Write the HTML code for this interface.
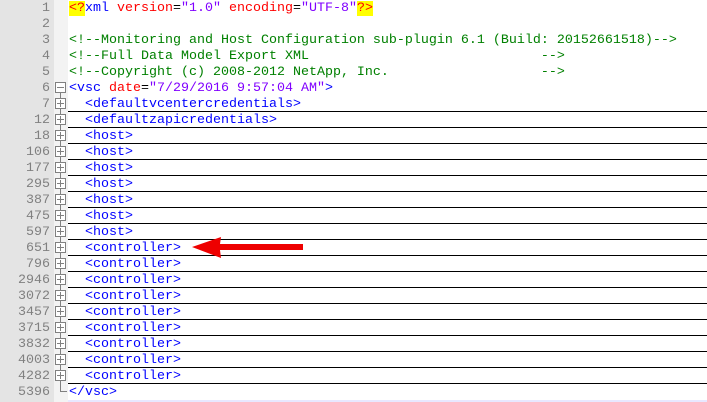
<!DOCTYPE html><html><head><style>
body{margin:0;width:707px;height:402px;background:#fff;overflow:hidden;font-family:"Liberation Mono",monospace;font-size:13.33px;position:relative}
.g{position:absolute;left:0;top:0;width:54px;height:402px;background:#e4e4e4}
.f{position:absolute;left:54px;top:0;width:14px;height:402px;background:#f3f3f3}
.r{position:absolute;left:0;height:16px;line-height:16px;width:707px;white-space:pre}
.n{position:absolute;left:0;top:1px;width:50px;text-align:right;color:#808080}
.t{position:absolute;left:69px;top:1px}
.u{position:absolute;left:68px;right:0;bottom:0;border-bottom:1px solid #000}
.b{position:absolute;left:55px;top:2px;width:11px;height:11px;border:1px solid #808080;background:#fff;box-sizing:border-box}
.b:before{content:"";position:absolute;left:1px;top:4px;width:7px;height:1px;background:#808080}
.p:after{content:"";position:absolute;left:4px;top:1px;width:1px;height:7px;background:#808080}
.c{color:#008000}.k{color:#0000ff}.a{color:#ff0000}.v{color:#8000ff}.y{background:#ffff00;color:#ff0000}
</style></head><body>
<div class="g"></div><div class="f"></div>
<div style="position:absolute;left:60px;top:93px;width:1px;height:299px;background:#808080"></div>
<div style="position:absolute;left:60px;top:391px;width:7px;height:1px;background:#808080"></div>
<div class="r" style="top:0"><span class="n">1</span><span class="t"><span class="y">&lt;?</span><span class="k">xml</span><span class="a"> version</span>=<span class="v">"1.0"</span><span class="a"> encoding</span>=<span class="v">"UTF-8"</span><span class="y">?&gt;</span></span></div>
<div class="r" style="top:16px"><span class="n">2</span></div>
<div class="r" style="top:32px"><span class="n">3</span><span class="t c">&lt;!--Monitoring and Host Configuration sub-plugin 6.1 (Build: 20152661518)--&gt;</span></div>
<div class="r" style="top:48px"><span class="n">4</span><span class="t c">&lt;!--Full Data Model Export XML                             --&gt;</span></div>
<div class="r" style="top:64px"><span class="n">5</span><span class="t c">&lt;!--Copyright (c) 2008-2012 NetApp, Inc.                   --&gt;</span></div>
<div class="r" style="top:80px"><span class="n">6</span><span class="b"></span><span class="t"><span class="k">&lt;vsc</span><span class="a"> date</span>=<span class="v">"7/29/2016 9:57:04 AM"</span><span class="k">&gt;</span></span></div>
<div class="r" style="top:96px"><span class="n">7</span><span class="b p"></span><span class="t k">  &lt;defaultvcentercredentials&gt;</span><span class="u"></span></div>
<div class="r" style="top:112px"><span class="n">12</span><span class="b p"></span><span class="t k">  &lt;defaultzapicredentials&gt;</span><span class="u"></span></div>
<div class="r" style="top:128px"><span class="n">18</span><span class="b p"></span><span class="t k">  &lt;host&gt;</span><span class="u"></span></div>
<div class="r" style="top:144px"><span class="n">106</span><span class="b p"></span><span class="t k">  &lt;host&gt;</span><span class="u"></span></div>
<div class="r" style="top:160px"><span class="n">177</span><span class="b p"></span><span class="t k">  &lt;host&gt;</span><span class="u"></span></div>
<div class="r" style="top:176px"><span class="n">295</span><span class="b p"></span><span class="t k">  &lt;host&gt;</span><span class="u"></span></div>
<div class="r" style="top:192px"><span class="n">387</span><span class="b p"></span><span class="t k">  &lt;host&gt;</span><span class="u"></span></div>
<div class="r" style="top:208px"><span class="n">475</span><span class="b p"></span><span class="t k">  &lt;host&gt;</span><span class="u"></span></div>
<div class="r" style="top:224px"><span class="n">597</span><span class="b p"></span><span class="t k">  &lt;host&gt;</span><span class="u"></span></div>
<div class="r" style="top:240px"><span class="n">651</span><span class="b p"></span><span class="t k">  &lt;controller&gt;</span><span class="u"></span></div>
<div class="r" style="top:256px"><span class="n">796</span><span class="b p"></span><span class="t k">  &lt;controller&gt;</span><span class="u"></span></div>
<div class="r" style="top:272px"><span class="n">2946</span><span class="b p"></span><span class="t k">  &lt;controller&gt;</span><span class="u"></span></div>
<div class="r" style="top:288px"><span class="n">3072</span><span class="b p"></span><span class="t k">  &lt;controller&gt;</span><span class="u"></span></div>
<div class="r" style="top:304px"><span class="n">3457</span><span class="b p"></span><span class="t k">  &lt;controller&gt;</span><span class="u"></span></div>
<div class="r" style="top:320px"><span class="n">3715</span><span class="b p"></span><span class="t k">  &lt;controller&gt;</span><span class="u"></span></div>
<div class="r" style="top:336px"><span class="n">3832</span><span class="b p"></span><span class="t k">  &lt;controller&gt;</span><span class="u"></span></div>
<div class="r" style="top:352px"><span class="n">4003</span><span class="b p"></span><span class="t k">  &lt;controller&gt;</span><span class="u"></span></div>
<div class="r" style="top:368px"><span class="n">4282</span><span class="b p"></span><span class="t k">  &lt;controller&gt;</span><span class="u"></span></div>
<div class="r" style="top:384px"><span class="n">5396</span><span class="t k">&lt;/vsc&gt;</span></div>
<div style="position:absolute;left:68px;top:400px;width:639px;height:2px;background:#e8e8ff"></div>
<svg style="position:absolute;left:0;top:0" width="707" height="402"><polygon points="192,247 221,237 220,244 303,244 303,250 220,250 221,258" fill="#ee0000"/></svg>
</body></html>
